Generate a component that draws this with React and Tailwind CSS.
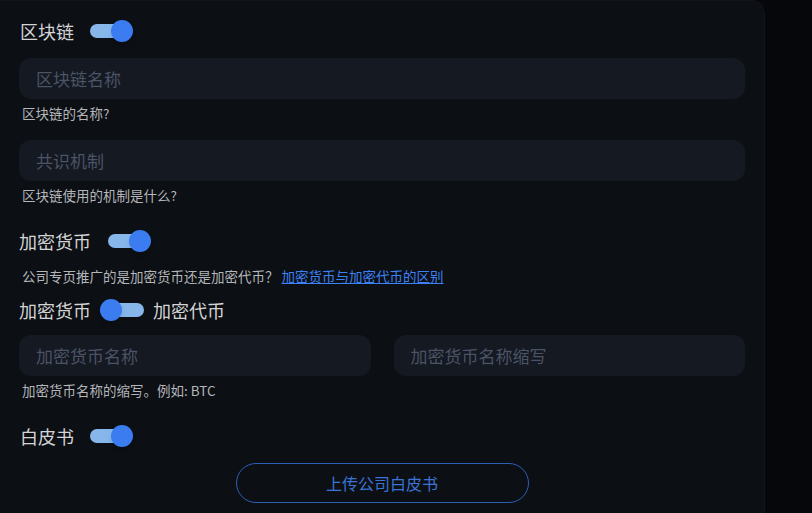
import { useState } from "react";

const Toggle = ({ on, onChange }) => (
  <button
    type="button"
    onClick={() => onChange(!on)}
    className="relative flex h-[22px] w-[44px] items-center"
  >
    <span
      className={
        "h-[14px] w-[38px] rounded-full bg-[#86b6ea] " + (on ? "ml-0" : "ml-[6px]")
      }
    />
    <span
      className={
        "absolute top-0 h-[22px] w-[22px] rounded-full bg-[#3b7cf0] shadow-md " +
        (on ? "left-[21px]" : "left-0")
      }
    />
  </button>
);

const Field = ({ placeholder }) => (
  <input
    placeholder={placeholder}
    className="h-[41px] w-full rounded-[12px] bg-[#151922] px-[17px] text-[17px] text-gray-200 placeholder:text-[#4b5366] outline-none"
  />
);

const Help = ({ children, className = "mt-[5px]" }) => (
  <p className={"pl-[3px] text-[13.5px] leading-[18px] text-[#b4b6ba] " + className}>
    {children}
  </p>
);

export default function App() {
  const [chain, setChain] = useState(true);
  const [crypto, setCrypto] = useState(true);
  const [token, setToken] = useState(false);
  const [paper, setPaper] = useState(true);

  return (
    <div
      className="min-h-[513px] w-[812px] bg-[#06070b]"
      style={{ fontFamily: '"Noto Sans CJK SC", "Noto Sans", sans-serif' }}
    >
      <div className="h-[513px] w-[765px] rounded-tr-[14px] border-t border-r border-[#12151b] bg-[#0c0f14] px-[19px] pt-[18px]">
        {/* 区块链 */}
        <div className="flex h-[24px] items-center gap-[16px] pl-[1px]">
          <span className="text-[18px] text-[#d4d4d4]">区块链</span>
          <Toggle on={chain} onChange={setChain} />
        </div>
        <div className="mt-[15px]">
          <Field placeholder="区块链名称" />
          <Help>区块链的名称?</Help>
        </div>
        <div className="mt-[18px]">
          <Field placeholder="共识机制" />
          <Help>区块链使用的机制是什么?</Help>
        </div>

        {/* 加密货币 */}
        <div className="mt-[25px] flex h-[24px] items-center gap-[17px]">
          <span className="text-[18px] text-[#d4d4d4]">加密货币</span>
          <Toggle on={crypto} onChange={setCrypto} />
        </div>
        <Help className="mt-[14px]">
          公司专页推广的是加密货币还是加密代币？{" "}
          <a href="#" className="text-[#3b82f6] underline">
            加密货币与加密代币的区别
          </a>
        </Help>
        <div className="mt-[13px] flex h-[24px] items-center gap-[9px]">
          <span className="text-[18px] text-[#d4d4d4]">加密货币</span>
          <Toggle on={token} onChange={setToken} />
          <span className="text-[18px] text-[#d4d4d4]">加密代币</span>
        </div>
        <div className="mt-[13px] grid grid-cols-2 gap-[23px]">
          <Field placeholder="加密货币名称" />
          <Field placeholder="加密货币名称缩写" />
        </div>
        <Help>加密货币名称的缩写。例如: BTC</Help>

        {/* 白皮书 */}
        <div className="mt-[25px] flex h-[24px] items-center gap-[16px] pl-[1px]">
          <span className="text-[18px] text-[#d4d4d4]">白皮书</span>
          <Toggle on={paper} onChange={setPaper} />
        </div>
        <div className="mt-[15px] flex justify-center">
          <button className="h-[40px] w-[293px] rounded-full border border-[#2c5fb5] text-[16px] text-[#3b74d4]">
            上传公司白皮书
          </button>
        </div>
      </div>
    </div>
  );
}
